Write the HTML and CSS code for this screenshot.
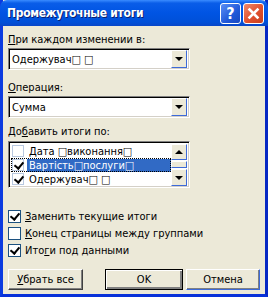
FILE: index.html
```html
<!DOCTYPE html>
<html lang="ru">
<head>
    <meta charset="UTF-8">
    <title>Промежуточные итоги</title>
    <link rel="stylesheet" href="styles.css">
</head>
<body>
    <div class="window">
        <div class="titlebar">
            <span class="title">Промежуточные итоги</span>
            <div class="title-buttons">
                <span class="tbtn help">?</span>
                <span class="tbtn close">
                    <svg width="13" height="13" viewBox="0 0 13 13"><path d="M2.5 2.5 L10.5 10.5 M10.5 2.5 L2.5 10.5" stroke="#fff" stroke-width="2.6" stroke-linecap="square"/></svg>
                </span>
            </div>
        </div>

        <div class="content">
            <div class="label"><u>П</u>ри каждом изменении в:</div>
            <div class="combo">
                <span class="combo-text">Одержувач□ □</span>
                <span class="arrow-btn"><span class="tri-down"></span></span>
            </div>

            <div class="label gap"><u>О</u>перация:</div>
            <div class="combo">
                <span class="combo-text">Сумма</span>
                <span class="arrow-btn"><span class="tri-down"></span></span>
            </div>

            <div class="label gap3">До<u>б</u>авить итоги по:</div>
            <div class="listbox">
                <div class="rows">
                    <div class="row"><span class="cb"></span><span class="rtext">Дата □виконання□</span></div>
                    <div class="row selected"><span class="cb checked"></span><span class="rtext">Вартість□послуги□</span></div>
                    <div class="row"><span class="cb checked"></span><span class="rtext">Одержувач□ □</span></div>
                </div>
                <div class="scrollbar">
                    <span class="sbtn"><span class="tri-up"></span></span>
                    <span class="thumb"></span>
                    <span class="sbtn down"><span class="tri-down"></span></span>
                </div>
            </div>

            <div class="checks">
                <div class="check"><span class="box checked"></span><span><u>З</u>аменить текущие итоги</span></div>
                <div class="check"><span class="box"></span><span><u>К</u>онец страницы между группами</span></div>
                <div class="check"><span class="box checked"></span><span>Ито<u>г</u>и под данными</span></div>
            </div>

            <div class="buttons">
                <button class="btn"><u>У</u>брать все</button>
                <button class="btn default">OK</button>
                <button class="btn">Отмена</button>
            </div>
        </div>
    </div>
</body>
</html>
```

FILE: styles.css
```css
* { box-sizing: border-box; }
body { margin: 0; font-family: "DejaVu Sans Condensed", "DejaVu Sans", sans-serif; font-stretch: condensed; font-size: 11px; color: #000; }
u { text-decoration: underline; text-underline-offset: 1px; }

.window {
    width: 268px;
    height: 297px;
    background: #ece9d8;
    border: 3px solid #0831d9;
    border-top: none;
    border-left-color: #0b3be0;
    border-right-color: #0628c4;
}
.titlebar {
    height: 26px;
    margin: 0 -3px;
    display: flex;
    align-items: center;
    justify-content: space-between;
    padding: 0 4px 0 7px;
    background: linear-gradient(#3a8cff 0%, #0a5de8 12%, #0054e3 50%, #0050d8 85%, #0846c8 100%);
    border-radius: 7px 7px 0 0;
}
.title { color: #fff; font-weight: bold; font-size: 12px; letter-spacing: -0.3px; text-shadow: 1px 1px #0a1f6e; }
.title-buttons { display: flex; gap: 2px; }
.tbtn {
    width: 21px;
    height: 21px;
    border: 1px solid #fff;
    border-radius: 3px;
    display: flex;
    align-items: center;
    justify-content: center;
    color: #fff;
    font-weight: bold;
    font-size: 16px;
}
.help { background: linear-gradient(135deg, #5b8ff5, #2058d8 60%, #1848c0); }
.close { background: linear-gradient(135deg, #f08a6a, #e0502e 55%, #c8401e); }

.content { padding: 7px 5px 0 5px; }
.label { height: 13px; line-height: 13px; }
.label.gap { margin-top: 11px; }
.label.gap3 { margin-top: 7px; }

.combo {
    margin-top: 2px;
    width: 182px;
    height: 22px;
    display: flex;
    align-items: center;
    background: #fff;
    border: 1px solid;
    border-color: #808080 #fff #fff #808080;
    box-shadow: inset 1px 1px #000, inset -1px -1px #d4d0c8;
}
.combo-text { flex: 1; padding-left: 3px; }
.arrow-btn {
    width: 16px;
    height: 18px;
    margin-right: 2px;
    display: flex;
    align-items: center;
    justify-content: center;
    background: #ece9d8;
    border: 1px solid;
    border-color: #fff #3d6ad8 #3d6ad8 #fff;
}
.tri-down { width: 0; height: 0; border: 4px solid transparent; border-top: 4px solid #000; border-bottom: 0; }
.tri-up { width: 0; height: 0; border: 4px solid transparent; border-bottom: 4px solid #000; border-top: 0; }

.listbox {
    margin-top: 3px;
    width: 182px;
    height: 47px;
    display: flex;
    background: #fff;
    border: 1px solid;
    border-color: #808080 #fff #fff #808080;
    box-shadow: inset 1px 1px #000, inset -1px -1px #d4d0c8;
    padding: 2px 2px 1px 2px;
}
.rows { flex: 1; }
.row { height: 14px; display: flex; align-items: center; }
.row .cb {
    width: 12px;
    height: 12px;
    margin: 0 3px 0 1px;
    border: 1px solid #b8c8e0;
    background: #fff;
    position: relative;
}
.rtext { height: 13px; line-height: 13px; padding: 0 2px; }
.row.selected .rtext { background: #316ac5; color: #fff; flex: 1; }
.row.selected { outline: 1px dotted #000; outline-offset: -1px; }

.cb.checked::after, .box.checked::after {
    content: "";
    position: absolute;
    left: 3px;
    top: 0px;
    width: 4px;
    height: 7px;
    border: solid #000;
    border-width: 0 2px 2px 0;
    transform: rotate(40deg);
}

.scrollbar { width: 16px; display: flex; flex-direction: column; }
.sbtn {
    height: 16px;
    display: flex;
    align-items: center;
    justify-content: center;
    background: #ece9d8;
    border: 1px solid;
    border-color: #fff #3d6ad8 #3d6ad8 #fff;
}
.sbtn.down { height: 17px; }
.thumb {
    flex: 1;
    margin: 1px 0;
    background: #ece9d8;
    border: 1px solid;
    border-color: #fff #3d6ad8 #3d6ad8 #fff;
}

.checks { margin-top: 20px; }
.check { height: 17px; display: flex; align-items: center; }
.box {
    width: 13px;
    height: 13px;
    margin-right: 4px;
    border: 1px solid #1c5180;
    background: #fff;
    position: relative;
}

.buttons { margin-top: 10px; display: flex; }
.btn {
    font-family: inherit;
    font-size: 11px;
    height: 21px;
    width: 75px;
    padding: 0;
    background: #ece9d8;
    border: 1px solid;
    border-color: #fff #404040 #404040 #fff;
    box-shadow: inset -1px -1px #808080;
    color: #000;
}
.btn.default { width: 78px; margin-left: 22px; border: 1px solid #000; box-shadow: inset 1px 1px #fff, inset -2px -2px #808080; }
.btn:last-child { width: 74px; margin-left: 3px; border-color: #fff #3d6ad8 #3d6ad8 #fff; }
```
